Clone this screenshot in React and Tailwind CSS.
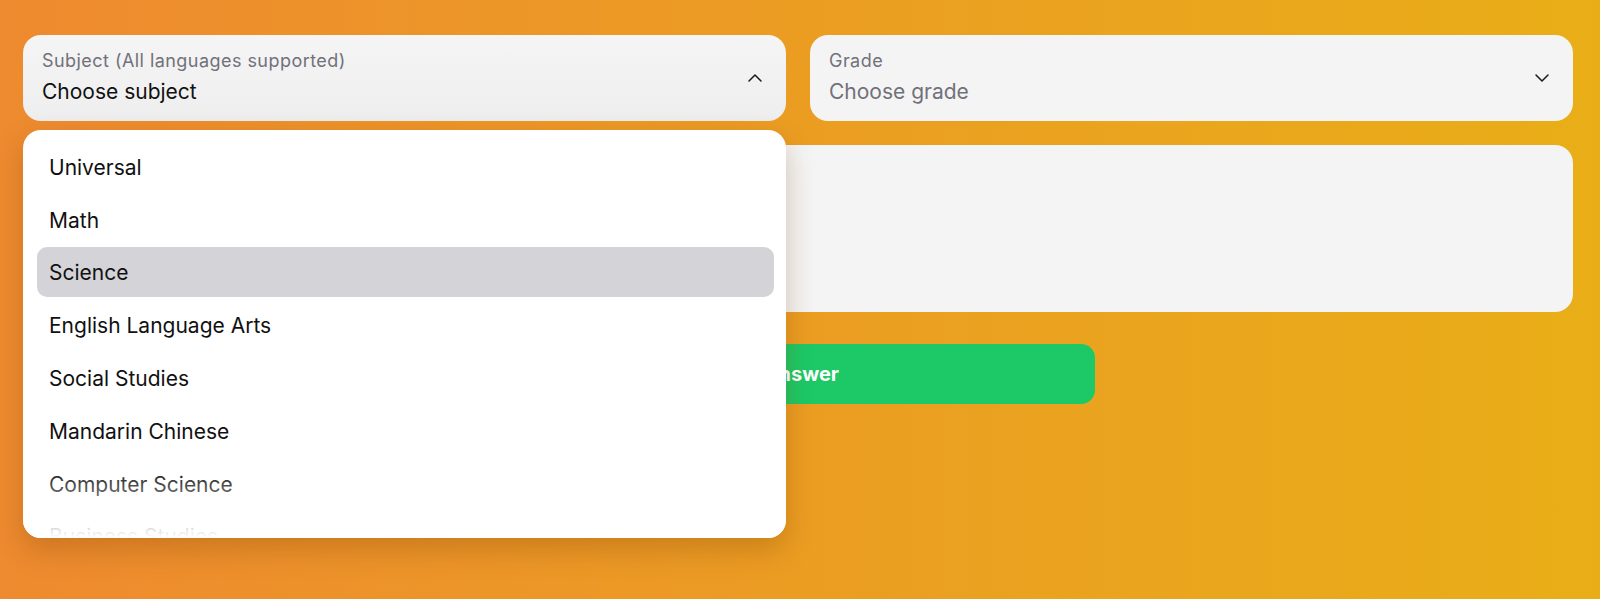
import React from "react";

const FONT = { fontFamily: "Inter, 'Noto Sans', sans-serif" };

function Chevron({ up }) {
  return (
    <svg width="24" height="24" viewBox="0 0 24 24" fill="none" stroke="#18181b" strokeWidth="1.5" strokeLinecap="round" strokeLinejoin="round">
      {up ? <path d="m18 15-6-6-6 6" /> : <path d="m6 9 6 6 6-6" />}
    </svg>
  );
}

const items = [
  "Universal",
  "Math",
  "Science",
  "English Language Arts",
  "Social Studies",
  "Mandarin Chinese",
  "Computer Science",
  "Business Studies",
];

export default function App() {
  return (
    <div
      className="relative w-full h-[599px] overflow-hidden bg-gradient-to-r from-[#ee8a2f] via-[#eb9d22] to-[#e9ae17] pl-[23px] pt-[35px]"
      style={FONT}
    >
      <div className="w-[1550px] flex flex-col">
        <div className="grid grid-cols-2 gap-6">
          <div className="h-[86px] rounded-[18px] bg-gradient-to-b from-[#f5f5f5] to-[#eeeeee] flex items-center justify-between pl-[19px] pr-[19px]">
            <div className="flex flex-col">
              <span className="text-[18px] leading-[22px] tracking-[0.025em] text-[#71717a]">Subject (All languages supported)</span>
              <span className="text-[21px] leading-[28px] mt-[6px] text-[#111]">Choose subject</span>
            </div>
            <Chevron up />
          </div>
          <div className="h-[86px] rounded-[18px] bg-[#f4f4f5] flex items-center justify-between pl-[19px] pr-[19px]">
            <div className="flex flex-col">
              <span className="text-[18px] leading-[22px] tracking-[0.025em] text-[#71717a]">Grade</span>
              <span className="text-[21px] leading-[28px] mt-[6px] text-[#71717a]">Choose grade</span>
            </div>
            <Chevron />
          </div>
        </div>
        <div className="mt-6 h-[167px] rounded-[18px] bg-[#f4f4f4]" />
        <button className="mt-8 w-[1072px] h-[60px] rounded-[14px] bg-[#1cc966] flex items-center justify-end pr-[256px] text-white text-[20px] font-bold">
          Get Answer
        </button>
      </div>

      <div className="absolute left-[23px] top-[130px] w-[763px] h-[408px] rounded-[18px] bg-white shadow-[0_12px_28px_rgba(120,60,0,0.28)] overflow-hidden">
        <div className="flex flex-col gap-[2.8px] pt-[11px] pl-[14px] pr-[12px]">
          {items.map((it) => (
            <div
              key={it}
              className={
                "h-[50px] shrink-0 rounded-[10px] flex items-center pl-3 pt-[3px] text-[21px] text-[#111] " +
                (it === "Science" ? "bg-[#d4d4d8]" : "")
              }
            >
              {it}
            </div>
          ))}
        </div>
        <div className="absolute left-0 right-0 bottom-0 h-[70px] bg-gradient-to-b from-white/0 to-white" />
      </div>
    </div>
  );
}
